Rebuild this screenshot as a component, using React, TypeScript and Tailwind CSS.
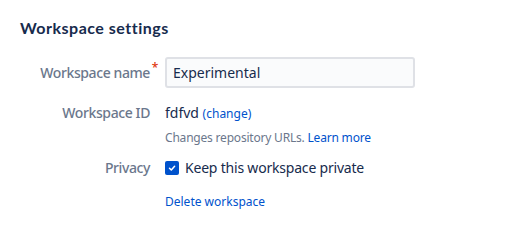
const font = { fontFamily: '"Noto Sans", "Open Sans", sans-serif' };

export default function App() {
  return (
    <div className="w-[530px] h-[231px] bg-white pl-5 pt-[16px]" style={font}>
      <h2 className="text-[16px] leading-6 font-bold text-[#172b4d] font-['Lato',sans-serif] tracking-[0.5px]">
        Workspace settings
      </h2>

      <div className="mt-[17px] grid grid-cols-[130px_1fr] gap-x-[15px] items-center text-[14px]">
        {/* name */}
        <label className="text-right font-medium text-[#6b778c] tracking-[-0.4px] relative">
          Workspace name
          <span className="absolute -right-[8px] -top-[3px] text-[12px] text-[#de350b]">*</span>
        </label>
        <input
          defaultValue="Experimental"
          className="w-[250px] h-[31px] px-[6px] border-2 border-[#dfe1e6] bg-[#fafbfc] rounded-[3px] text-[#172b4d] text-[14px] outline-none"
        />

        {/* id */}
        <div className="text-right font-medium text-[#6b778c] tracking-[-0.4px] mt-[14px]">Workspace ID</div>
        <div className="mt-[14px] text-[#172b4d]">
          fdfvd <a className="text-[12px] text-[#0052cc]">(change)</a>
        </div>
        <div />
        <div className="mt-[6px] text-[12px] tracking-[-0.2px] text-[#6b778c]">
          Changes repository URLs. <a className="text-[#0052cc]">Learn more</a>
        </div>

        {/* privacy */}
        <div className="text-right font-medium text-[#6b778c] tracking-[-0.4px] mt-[10px]">Privacy</div>
        <label className="mt-[10px] flex items-center gap-[6px] tracking-[-0.2px] text-[#172b4d]">
          <span className="w-[14px] h-[14px] rounded-[2px] bg-[#0052cc] flex items-center justify-center">
            <svg width="10" height="10" viewBox="0 0 10 10" fill="none">
              <path d="M2.5 5.2 L4.3 7 L7.6 3.3" stroke="white" strokeWidth="1.5" strokeLinecap="round" strokeLinejoin="round" />
            </svg>
          </span>
          Keep this workspace private
        </label>
        <div />
        <a className="mt-[15px] text-[12px] text-[#0052cc]">Delete workspace</a>
      </div>
    </div>
  );
}
